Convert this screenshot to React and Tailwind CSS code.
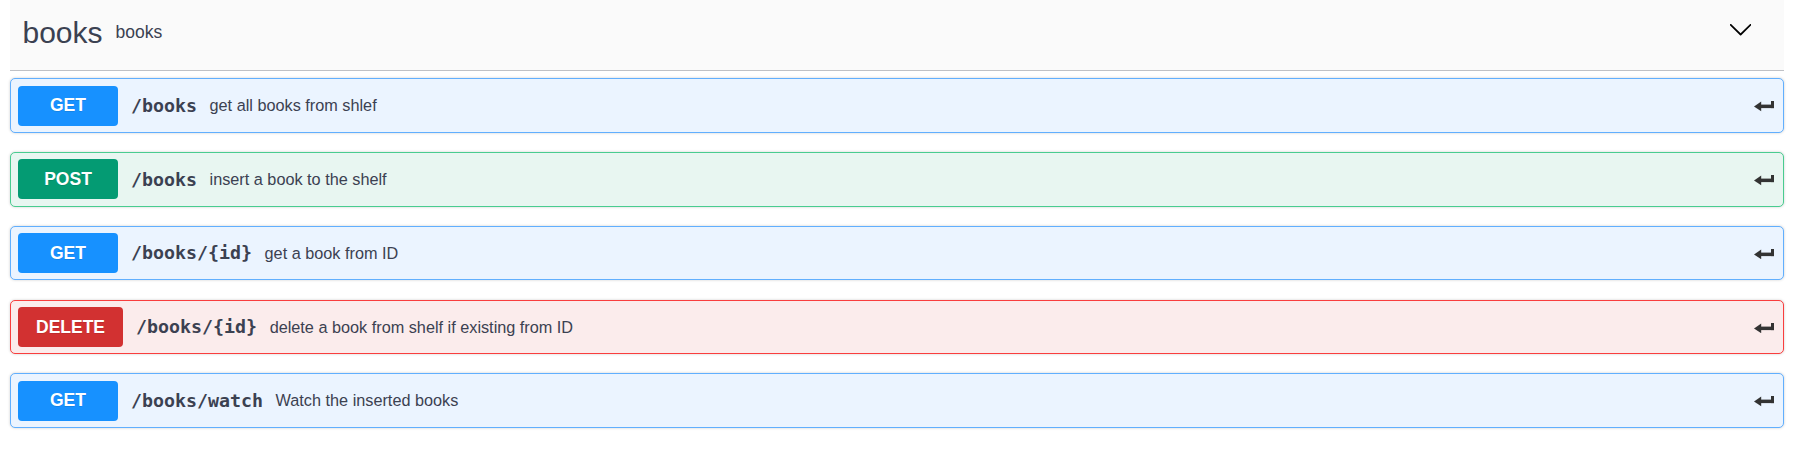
import React from "react";

const ops = [
  { method: "GET", path: "/books", desc: "get all books from shlef" },
  { method: "POST", path: "/books", desc: "insert a book to the shelf" },
  { method: "GET", path: "/books/{id}", desc: "get a book from ID" },
  { method: "DELETE", path: "/books/{id}", desc: "delete a book from shelf if existing from ID" },
  { method: "GET", path: "/books/watch", desc: "Watch the inserted books" },
];

// per-method colours (block bg, border, badge)
const theme = {
  GET: { block: "bg-[#ebf4ff] border-[#61affe]", badge: "bg-[#1791ff] min-w-[100px]" },
  POST: { block: "bg-[#e8f6f1] border-[#49cc90]", badge: "bg-[#049b73] min-w-[100px]" },
  DELETE: { block: "bg-[#fbecec] border-[#f93e3e]", badge: "bg-[#d23131] min-w-[100px] px-[18px]" },
};

const ReturnIcon = () => (
  <svg width="20" height="10.5" viewBox="0 0 20 10.5" className="mt-[2px] text-[#333]">
    <polygon points="0,5.4 7.2,0.6 7.2,10.2" fill="currentColor" />
    <rect x="6" y="3.6" width="14" height="3.5" fill="currentColor" />
    <rect x="17" y="0" width="3" height="7.1" fill="currentColor" />
  </svg>
);

const OpBlock = ({ op }) => {
  const t = theme[op.method];
  return (
    <div
      className={`flex items-center h-[54.5px] border rounded-[5px] pl-[7px] pr-[9.5px] shadow-[0_0_3px_rgba(0,0,0,0.19)] ${t.block}`}
    >
      <span
        className={`flex items-center justify-center h-[40px] rounded-[4px] text-white text-[17.5px] font-bold [text-shadow:0_1px_0_rgba(0,0,0,0.1)] ${t.badge}`}
      >
        {op.method}
      </span>
      <span className="pl-[13px] pr-[12.5px] text-[18.3px] font-bold text-[#3b4151] font-['DejaVu_Sans_Mono',monospace]">
        {op.path}
      </span>
      <span className="flex-1 text-[16.25px] text-[#3b4151]">{op.desc}</span>
      <ReturnIcon />
    </div>
  );
};

export default function App() {
  return (
    <div className="w-[1807px] h-[456px] bg-white pl-[10px] pr-[23px] font-['Liberation_Sans',Arial,sans-serif]">
      <div className="flex items-center h-[71px] pb-[6px] pl-[12.5px] bg-[#fafafa] border-b border-[#bfc1c6] text-[#3b4151]">
        <span className="text-[30px]">books</span>
        <span className="pl-[13px] text-[17.5px] flex-1">books</span>
        <svg
          width="21.25"
          height="11.5"
          viewBox="1.5 5.9 17 9.2"
          className="self-start mt-[24px] mr-[33px] text-black"
        >
          <path
            fill="currentColor"
            d="M17.418 6.109c.272-.268.709-.268.979 0s.271.701 0 .969l-7.908 7.83c-.27.268-.707.268-.979 0l-7.908-7.83c-.27-.268-.27-.701 0-.969.271-.268.709-.268.979 0L10 13.25l7.418-7.141z"
          />
        </svg>
      </div>
      <div className="flex flex-col gap-[19.25px] mt-[7.3px]">
        {ops.map((op, i) => (
          <OpBlock key={i} op={op} />
        ))}
      </div>
    </div>
  );
}
